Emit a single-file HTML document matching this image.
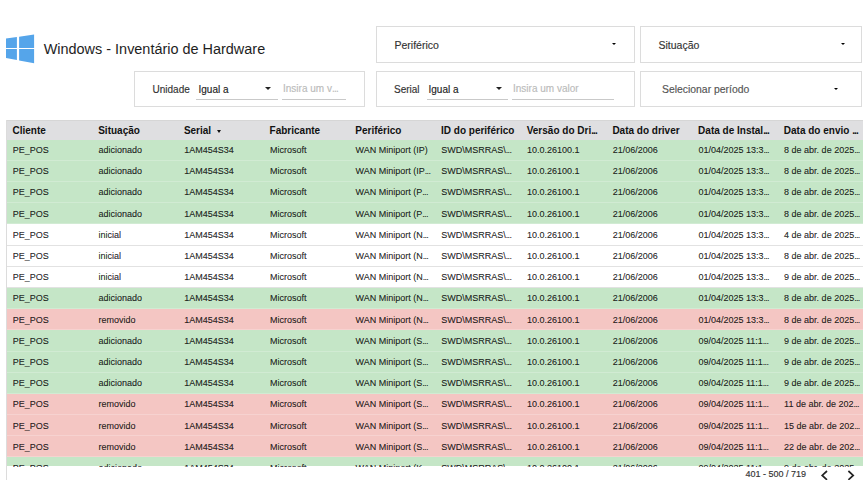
<!DOCTYPE html>
<html><head><meta charset="utf-8">
<style>
*{box-sizing:border-box;margin:0;padding:0}
html,body{width:863px;height:480px;overflow:hidden;background:#fff}
body{position:relative;font-family:"Liberation Sans",sans-serif;color:#222}
.abs{position:absolute;white-space:nowrap}
.box{position:absolute;border:1px solid #dcdcdc;background:#fff}
.lbl{position:absolute;white-space:nowrap;font-size:10px;color:#333;line-height:12px;-webkit-text-stroke:0.15px currentColor}
.tri{position:absolute;width:0;height:0;border-left:3.4px solid transparent;border-right:3.4px solid transparent;border-top:3.4px solid #222}
.tri.s{border-left-width:2.2px;border-right-width:2.2px;border-top-width:2.7px;border-top-color:#000}
.ul{position:absolute;height:1px;background:#c9c9c9}
.tbl{position:absolute;left:6px;top:120px;width:857px;height:347px;overflow:hidden;border-left:1px solid #dcdcdc}
.hd{position:absolute;left:0;top:0;width:857px;height:19.55px;background:#dfdfe1;border-top:1px solid #d6d6d6}
.row{position:absolute;left:0;width:857px}
.g{background:#c5e6c7}
.r{background:#f4c6c3}
.w{background:#fff}
.row.g,.row.r{border-bottom:1px solid rgba(255,255,255,0.22)}
.row.w{border-bottom:1px solid #e2e2e2}
.c{position:absolute;white-space:nowrap;font-size:9px;color:rgba(0,0,0,0.84);line-height:11px;-webkit-text-stroke:0.15px rgba(0,0,0,0.84)}
.el{letter-spacing:-0.7px}
.h .el{letter-spacing:-0.9px}
.h{position:absolute;white-space:nowrap;font-size:10px;font-weight:bold;color:#111;line-height:12px}
</style></head><body>

<svg class="abs" style="left:6px;top:34px" width="29" height="30" viewBox="0 0 29 30">
<path d="M0 4.5 L10.9 2.95 L10.9 13.95 L0 13.95 Z M13.1 2.65 L28.1 0.55 L28.1 13.95 L13.1 13.95 Z M0 14.95 L10.9 14.95 L10.9 26.0 L0 24.0 Z M13.1 14.95 L28.1 14.95 L28.1 29.2 L13.1 26.4 Z" fill="#55a5ea"/>
</svg>
<div class="abs" style="left:43.7px;top:41.3px;font-size:14.45px;line-height:17px;color:#1e1e1e">Windows - Inventário de Hardware</div>
<div class="box" style="left:376px;top:26px;width:259px;height:37px"></div>
<div class="lbl" style="left:394.5px;top:38.8px;font-size:10.5px">Periférico</div>
<div class="tri s" style="left:612.3px;top:43.2px"></div>
<div class="box" style="left:640px;top:26px;width:222px;height:37px"></div>
<div class="lbl" style="left:658.5px;top:38.8px;font-size:10.5px">Situação</div>
<div class="tri s" style="left:841.3px;top:43px"></div>
<div class="box" style="left:134px;top:71px;width:231px;height:36px"></div>
<div class="lbl" style="left:152.5px;top:84px">Unidade</div>
<div class="lbl" style="left:198.5px;top:84px;color:#222">Igual a</div>
<div class="tri" style="left:265px;top:86.9px"></div>
<div class="ul" style="left:196px;top:99px;width:82px"></div>
<div class="lbl" style="left:283px;top:83.3px;color:#bbb">Insira um v<span class="el">...</span></div>
<div class="ul" style="left:282px;top:99px;width:64px"></div>
<div class="box" style="left:376px;top:71px;width:259px;height:36px"></div>
<div class="lbl" style="left:394px;top:84px">Serial</div>
<div class="lbl" style="left:428.5px;top:84px;color:#222">Igual a</div>
<div class="tri" style="left:495.5px;top:86.9px"></div>
<div class="ul" style="left:427px;top:99px;width:81px"></div>
<div class="lbl" style="left:513px;top:83.3px;color:#bbb">Insira um valor</div>
<div class="ul" style="left:512px;top:99px;width:102px"></div>
<div class="box" style="left:640px;top:71px;width:222px;height:36px"></div>
<div class="lbl" style="left:662px;top:84px;color:#555;font-size:10.4px">Selecionar período</div>
<div class="tri s" style="left:834px;top:88px"></div>
<div class="tbl">
<div class="hd">
<div class="h" style="left:5.50px;top:3.8px">Cliente</div>
<div class="h" style="left:91.20px;top:3.8px">Situação</div>
<div class="h" style="left:176.90px;top:3.8px">Serial</div>
<div class="h" style="left:262.60px;top:3.8px">Fabricante</div>
<div class="h" style="left:348.30px;top:3.8px">Periférico</div>
<div class="h" style="left:434.00px;top:3.8px">ID do periférico</div>
<div class="h" style="left:519.70px;top:3.8px">Versão do Dri<span class="el">...</span></div>
<div class="h" style="left:605.40px;top:3.8px">Data do driver</div>
<div class="h" style="left:691.10px;top:3.8px">Data de Instal<span class="el">...</span></div>
<div class="h" style="left:776.80px;top:3.8px">Data do envio <span class="el">...</span></div>
<div class="tri" style="left:209.5px;top:9.1px;border-left-width:2.7px;border-right-width:2.7px;border-top-width:3px;border-top-color:#111"></div>
</div>
<div class="row g" style="top:20px;height:21px">
<div class="c" style="left:5.80px;top:5.05px">PE_POS</div>
<div class="c" style="left:91.50px;top:5.05px">adicionado</div>
<div class="c" style="left:177.20px;top:5.05px">1AM454S34</div>
<div class="c" style="left:262.90px;top:5.05px">Microsoft</div>
<div class="c" style="left:348.60px;top:5.05px">WAN Miniport (IP)</div>
<div class="c" style="left:434.30px;top:5.05px">SWD\MSRRAS\<span class="el">...</span></div>
<div class="c" style="left:520.00px;top:5.05px">10.0.26100.1</div>
<div class="c" style="left:605.70px;top:5.05px">21/06/2006</div>
<div class="c" style="left:691.40px;top:5.05px">01/04/2025 13:3<span class="el">...</span></div>
<div class="c" style="left:777.10px;top:5.05px">8 de abr. de 2025<span class="el">...</span></div>
</div>
<div class="row g" style="top:41px;height:21px">
<div class="c" style="left:5.80px;top:5.25px">PE_POS</div>
<div class="c" style="left:91.50px;top:5.25px">adicionado</div>
<div class="c" style="left:177.20px;top:5.25px">1AM454S34</div>
<div class="c" style="left:262.90px;top:5.25px">Microsoft</div>
<div class="c" style="left:348.60px;top:5.25px">WAN Miniport (IP<span class="el">...</span></div>
<div class="c" style="left:434.30px;top:5.25px">SWD\MSRRAS\<span class="el">...</span></div>
<div class="c" style="left:520.00px;top:5.25px">10.0.26100.1</div>
<div class="c" style="left:605.70px;top:5.25px">21/06/2006</div>
<div class="c" style="left:691.40px;top:5.25px">01/04/2025 13:3<span class="el">...</span></div>
<div class="c" style="left:777.10px;top:5.25px">8 de abr. de 2025<span class="el">...</span></div>
</div>
<div class="row g" style="top:62px;height:21px">
<div class="c" style="left:5.80px;top:5.44px">PE_POS</div>
<div class="c" style="left:91.50px;top:5.44px">adicionado</div>
<div class="c" style="left:177.20px;top:5.44px">1AM454S34</div>
<div class="c" style="left:262.90px;top:5.44px">Microsoft</div>
<div class="c" style="left:348.60px;top:5.44px">WAN Miniport (P<span class="el">...</span></div>
<div class="c" style="left:434.30px;top:5.44px">SWD\MSRRAS\<span class="el">...</span></div>
<div class="c" style="left:520.00px;top:5.44px">10.0.26100.1</div>
<div class="c" style="left:605.70px;top:5.44px">21/06/2006</div>
<div class="c" style="left:691.40px;top:5.44px">01/04/2025 13:3<span class="el">...</span></div>
<div class="c" style="left:777.10px;top:5.44px">8 de abr. de 2025<span class="el">...</span></div>
</div>
<div class="row g" style="top:83px;height:21px">
<div class="c" style="left:5.80px;top:5.64px">PE_POS</div>
<div class="c" style="left:91.50px;top:5.64px">adicionado</div>
<div class="c" style="left:177.20px;top:5.64px">1AM454S34</div>
<div class="c" style="left:262.90px;top:5.64px">Microsoft</div>
<div class="c" style="left:348.60px;top:5.64px">WAN Miniport (P<span class="el">...</span></div>
<div class="c" style="left:434.30px;top:5.64px">SWD\MSRRAS\<span class="el">...</span></div>
<div class="c" style="left:520.00px;top:5.64px">10.0.26100.1</div>
<div class="c" style="left:605.70px;top:5.64px">21/06/2006</div>
<div class="c" style="left:691.40px;top:5.64px">01/04/2025 13:3<span class="el">...</span></div>
<div class="c" style="left:777.10px;top:5.64px">8 de abr. de 2025<span class="el">...</span></div>
</div>
<div class="row w" style="top:104px;height:22px">
<div class="c" style="left:5.80px;top:5.83px">PE_POS</div>
<div class="c" style="left:91.50px;top:5.83px">inicial</div>
<div class="c" style="left:177.20px;top:5.83px">1AM454S34</div>
<div class="c" style="left:262.90px;top:5.83px">Microsoft</div>
<div class="c" style="left:348.60px;top:5.83px">WAN Miniport (N<span class="el">...</span></div>
<div class="c" style="left:434.30px;top:5.83px">SWD\MSRRAS\<span class="el">...</span></div>
<div class="c" style="left:520.00px;top:5.83px">10.0.26100.1</div>
<div class="c" style="left:605.70px;top:5.83px">21/06/2006</div>
<div class="c" style="left:691.40px;top:5.83px">01/04/2025 13:3<span class="el">...</span></div>
<div class="c" style="left:777.10px;top:5.83px">4 de abr. de 2025<span class="el">...</span></div>
</div>
<div class="row w" style="top:126px;height:21px">
<div class="c" style="left:5.80px;top:5.03px">PE_POS</div>
<div class="c" style="left:91.50px;top:5.03px">inicial</div>
<div class="c" style="left:177.20px;top:5.03px">1AM454S34</div>
<div class="c" style="left:262.90px;top:5.03px">Microsoft</div>
<div class="c" style="left:348.60px;top:5.03px">WAN Miniport (N<span class="el">...</span></div>
<div class="c" style="left:434.30px;top:5.03px">SWD\MSRRAS\<span class="el">...</span></div>
<div class="c" style="left:520.00px;top:5.03px">10.0.26100.1</div>
<div class="c" style="left:605.70px;top:5.03px">21/06/2006</div>
<div class="c" style="left:691.40px;top:5.03px">01/04/2025 13:3<span class="el">...</span></div>
<div class="c" style="left:777.10px;top:5.03px">8 de abr. de 2025<span class="el">...</span></div>
</div>
<div class="row w" style="top:147px;height:21px">
<div class="c" style="left:5.80px;top:5.22px">PE_POS</div>
<div class="c" style="left:91.50px;top:5.22px">inicial</div>
<div class="c" style="left:177.20px;top:5.22px">1AM454S34</div>
<div class="c" style="left:262.90px;top:5.22px">Microsoft</div>
<div class="c" style="left:348.60px;top:5.22px">WAN Miniport (N<span class="el">...</span></div>
<div class="c" style="left:434.30px;top:5.22px">SWD\MSRRAS\<span class="el">...</span></div>
<div class="c" style="left:520.00px;top:5.22px">10.0.26100.1</div>
<div class="c" style="left:605.70px;top:5.22px">21/06/2006</div>
<div class="c" style="left:691.40px;top:5.22px">01/04/2025 13:3<span class="el">...</span></div>
<div class="c" style="left:777.10px;top:5.22px">9 de abr. de 2025<span class="el">...</span></div>
</div>
<div class="row g" style="top:168px;height:21px">
<div class="c" style="left:5.80px;top:5.42px">PE_POS</div>
<div class="c" style="left:91.50px;top:5.42px">adicionado</div>
<div class="c" style="left:177.20px;top:5.42px">1AM454S34</div>
<div class="c" style="left:262.90px;top:5.42px">Microsoft</div>
<div class="c" style="left:348.60px;top:5.42px">WAN Miniport (N<span class="el">...</span></div>
<div class="c" style="left:434.30px;top:5.42px">SWD\MSRRAS\<span class="el">...</span></div>
<div class="c" style="left:520.00px;top:5.42px">10.0.26100.1</div>
<div class="c" style="left:605.70px;top:5.42px">21/06/2006</div>
<div class="c" style="left:691.40px;top:5.42px">01/04/2025 13:3<span class="el">...</span></div>
<div class="c" style="left:777.10px;top:5.42px">8 de abr. de 2025<span class="el">...</span></div>
</div>
<div class="row r" style="top:189px;height:21px">
<div class="c" style="left:5.80px;top:5.61px">PE_POS</div>
<div class="c" style="left:91.50px;top:5.61px">removido</div>
<div class="c" style="left:177.20px;top:5.61px">1AM454S34</div>
<div class="c" style="left:262.90px;top:5.61px">Microsoft</div>
<div class="c" style="left:348.60px;top:5.61px">WAN Miniport (N<span class="el">...</span></div>
<div class="c" style="left:434.30px;top:5.61px">SWD\MSRRAS\<span class="el">...</span></div>
<div class="c" style="left:520.00px;top:5.61px">10.0.26100.1</div>
<div class="c" style="left:605.70px;top:5.61px">21/06/2006</div>
<div class="c" style="left:691.40px;top:5.61px">01/04/2025 13:3<span class="el">...</span></div>
<div class="c" style="left:777.10px;top:5.61px">8 de abr. de 2025<span class="el">...</span></div>
</div>
<div class="row g" style="top:210px;height:22px">
<div class="c" style="left:5.80px;top:5.81px">PE_POS</div>
<div class="c" style="left:91.50px;top:5.81px">adicionado</div>
<div class="c" style="left:177.20px;top:5.81px">1AM454S34</div>
<div class="c" style="left:262.90px;top:5.81px">Microsoft</div>
<div class="c" style="left:348.60px;top:5.81px">WAN Miniport (S<span class="el">...</span></div>
<div class="c" style="left:434.30px;top:5.81px">SWD\MSRRAS\<span class="el">...</span></div>
<div class="c" style="left:520.00px;top:5.81px">10.0.26100.1</div>
<div class="c" style="left:605.70px;top:5.81px">21/06/2006</div>
<div class="c" style="left:691.40px;top:5.81px">09/04/2025 11:1<span class="el">...</span></div>
<div class="c" style="left:777.10px;top:5.81px">9 de abr. de 2025<span class="el">...</span></div>
</div>
<div class="row g" style="top:232px;height:21px">
<div class="c" style="left:5.80px;top:5.00px">PE_POS</div>
<div class="c" style="left:91.50px;top:5.00px">adicionado</div>
<div class="c" style="left:177.20px;top:5.00px">1AM454S34</div>
<div class="c" style="left:262.90px;top:5.00px">Microsoft</div>
<div class="c" style="left:348.60px;top:5.00px">WAN Miniport (S<span class="el">...</span></div>
<div class="c" style="left:434.30px;top:5.00px">SWD\MSRRAS\<span class="el">...</span></div>
<div class="c" style="left:520.00px;top:5.00px">10.0.26100.1</div>
<div class="c" style="left:605.70px;top:5.00px">21/06/2006</div>
<div class="c" style="left:691.40px;top:5.00px">09/04/2025 11:1<span class="el">...</span></div>
<div class="c" style="left:777.10px;top:5.00px">9 de abr. de 2025<span class="el">...</span></div>
</div>
<div class="row g" style="top:253px;height:21px">
<div class="c" style="left:5.80px;top:5.20px">PE_POS</div>
<div class="c" style="left:91.50px;top:5.20px">adicionado</div>
<div class="c" style="left:177.20px;top:5.20px">1AM454S34</div>
<div class="c" style="left:262.90px;top:5.20px">Microsoft</div>
<div class="c" style="left:348.60px;top:5.20px">WAN Miniport (S<span class="el">...</span></div>
<div class="c" style="left:434.30px;top:5.20px">SWD\MSRRAS\<span class="el">...</span></div>
<div class="c" style="left:520.00px;top:5.20px">10.0.26100.1</div>
<div class="c" style="left:605.70px;top:5.20px">21/06/2006</div>
<div class="c" style="left:691.40px;top:5.20px">09/04/2025 11:1<span class="el">...</span></div>
<div class="c" style="left:777.10px;top:5.20px">9 de abr. de 2025<span class="el">...</span></div>
</div>
<div class="row r" style="top:274px;height:21px">
<div class="c" style="left:5.80px;top:5.39px">PE_POS</div>
<div class="c" style="left:91.50px;top:5.39px">removido</div>
<div class="c" style="left:177.20px;top:5.39px">1AM454S34</div>
<div class="c" style="left:262.90px;top:5.39px">Microsoft</div>
<div class="c" style="left:348.60px;top:5.39px">WAN Miniport (S<span class="el">...</span></div>
<div class="c" style="left:434.30px;top:5.39px">SWD\MSRRAS\<span class="el">...</span></div>
<div class="c" style="left:520.00px;top:5.39px">10.0.26100.1</div>
<div class="c" style="left:605.70px;top:5.39px">21/06/2006</div>
<div class="c" style="left:691.40px;top:5.39px">09/04/2025 11:1<span class="el">...</span></div>
<div class="c" style="left:777.10px;top:5.39px">11 de abr. de 202<span class="el">...</span></div>
</div>
<div class="row r" style="top:295px;height:21px">
<div class="c" style="left:5.80px;top:5.59px">PE_POS</div>
<div class="c" style="left:91.50px;top:5.59px">removido</div>
<div class="c" style="left:177.20px;top:5.59px">1AM454S34</div>
<div class="c" style="left:262.90px;top:5.59px">Microsoft</div>
<div class="c" style="left:348.60px;top:5.59px">WAN Miniport (S<span class="el">...</span></div>
<div class="c" style="left:434.30px;top:5.59px">SWD\MSRRAS\<span class="el">...</span></div>
<div class="c" style="left:520.00px;top:5.59px">10.0.26100.1</div>
<div class="c" style="left:605.70px;top:5.59px">21/06/2006</div>
<div class="c" style="left:691.40px;top:5.59px">09/04/2025 11:1<span class="el">...</span></div>
<div class="c" style="left:777.10px;top:5.59px">15 de abr. de 202<span class="el">...</span></div>
</div>
<div class="row r" style="top:316px;height:21px">
<div class="c" style="left:5.80px;top:5.78px">PE_POS</div>
<div class="c" style="left:91.50px;top:5.78px">removido</div>
<div class="c" style="left:177.20px;top:5.78px">1AM454S34</div>
<div class="c" style="left:262.90px;top:5.78px">Microsoft</div>
<div class="c" style="left:348.60px;top:5.78px">WAN Miniport (S<span class="el">...</span></div>
<div class="c" style="left:434.30px;top:5.78px">SWD\MSRRAS\<span class="el">...</span></div>
<div class="c" style="left:520.00px;top:5.78px">10.0.26100.1</div>
<div class="c" style="left:605.70px;top:5.78px">21/06/2006</div>
<div class="c" style="left:691.40px;top:5.78px">09/04/2025 11:1<span class="el">...</span></div>
<div class="c" style="left:777.10px;top:5.78px">22 de abr. de 202<span class="el">...</span></div>
</div>
<div class="row g" style="top:337px;height:8.6px;border-bottom:none">
<div class="c" style="left:5.80px;top:5.98px">PE_POS</div>
<div class="c" style="left:91.50px;top:5.98px">adicionado</div>
<div class="c" style="left:177.20px;top:5.98px">1AM454S34</div>
<div class="c" style="left:262.90px;top:5.98px">Microsoft</div>
<div class="c" style="left:348.60px;top:5.98px">WAN Miniport (K<span class="el">...</span></div>
<div class="c" style="left:434.30px;top:5.98px">SWD\MSRRAS\<span class="el">...</span></div>
<div class="c" style="left:520.00px;top:5.98px">10.0.26100.1</div>
<div class="c" style="left:605.70px;top:5.98px">21/06/2006</div>
<div class="c" style="left:691.40px;top:5.98px">09/04/2025 11:1<span class="el">...</span></div>
<div class="c" style="left:777.10px;top:5.98px">9 de abr. de 2025<span class="el">...</span></div>
</div>
</div>
<div class="abs" style="left:6px;top:467px;width:1px;height:13px;background:#dcdcdc"></div>
<div class="abs" style="left:745.5px;top:469.3px;font-size:9px;line-height:11px;color:#333;-webkit-text-stroke:0.15px #333">401 - 500 / 719</div>
<svg class="abs" style="left:818px;top:469px" width="40" height="11" viewBox="0 0 40 11">
<path d="M9 2 L4.2 6.4 L9 10.8" stroke="#222" stroke-width="1.7" fill="none"/>
<path d="M30.4 2 L35.2 6.4 L30.4 10.8" stroke="#222" stroke-width="1.7" fill="none"/>
</svg>
</body></html>
